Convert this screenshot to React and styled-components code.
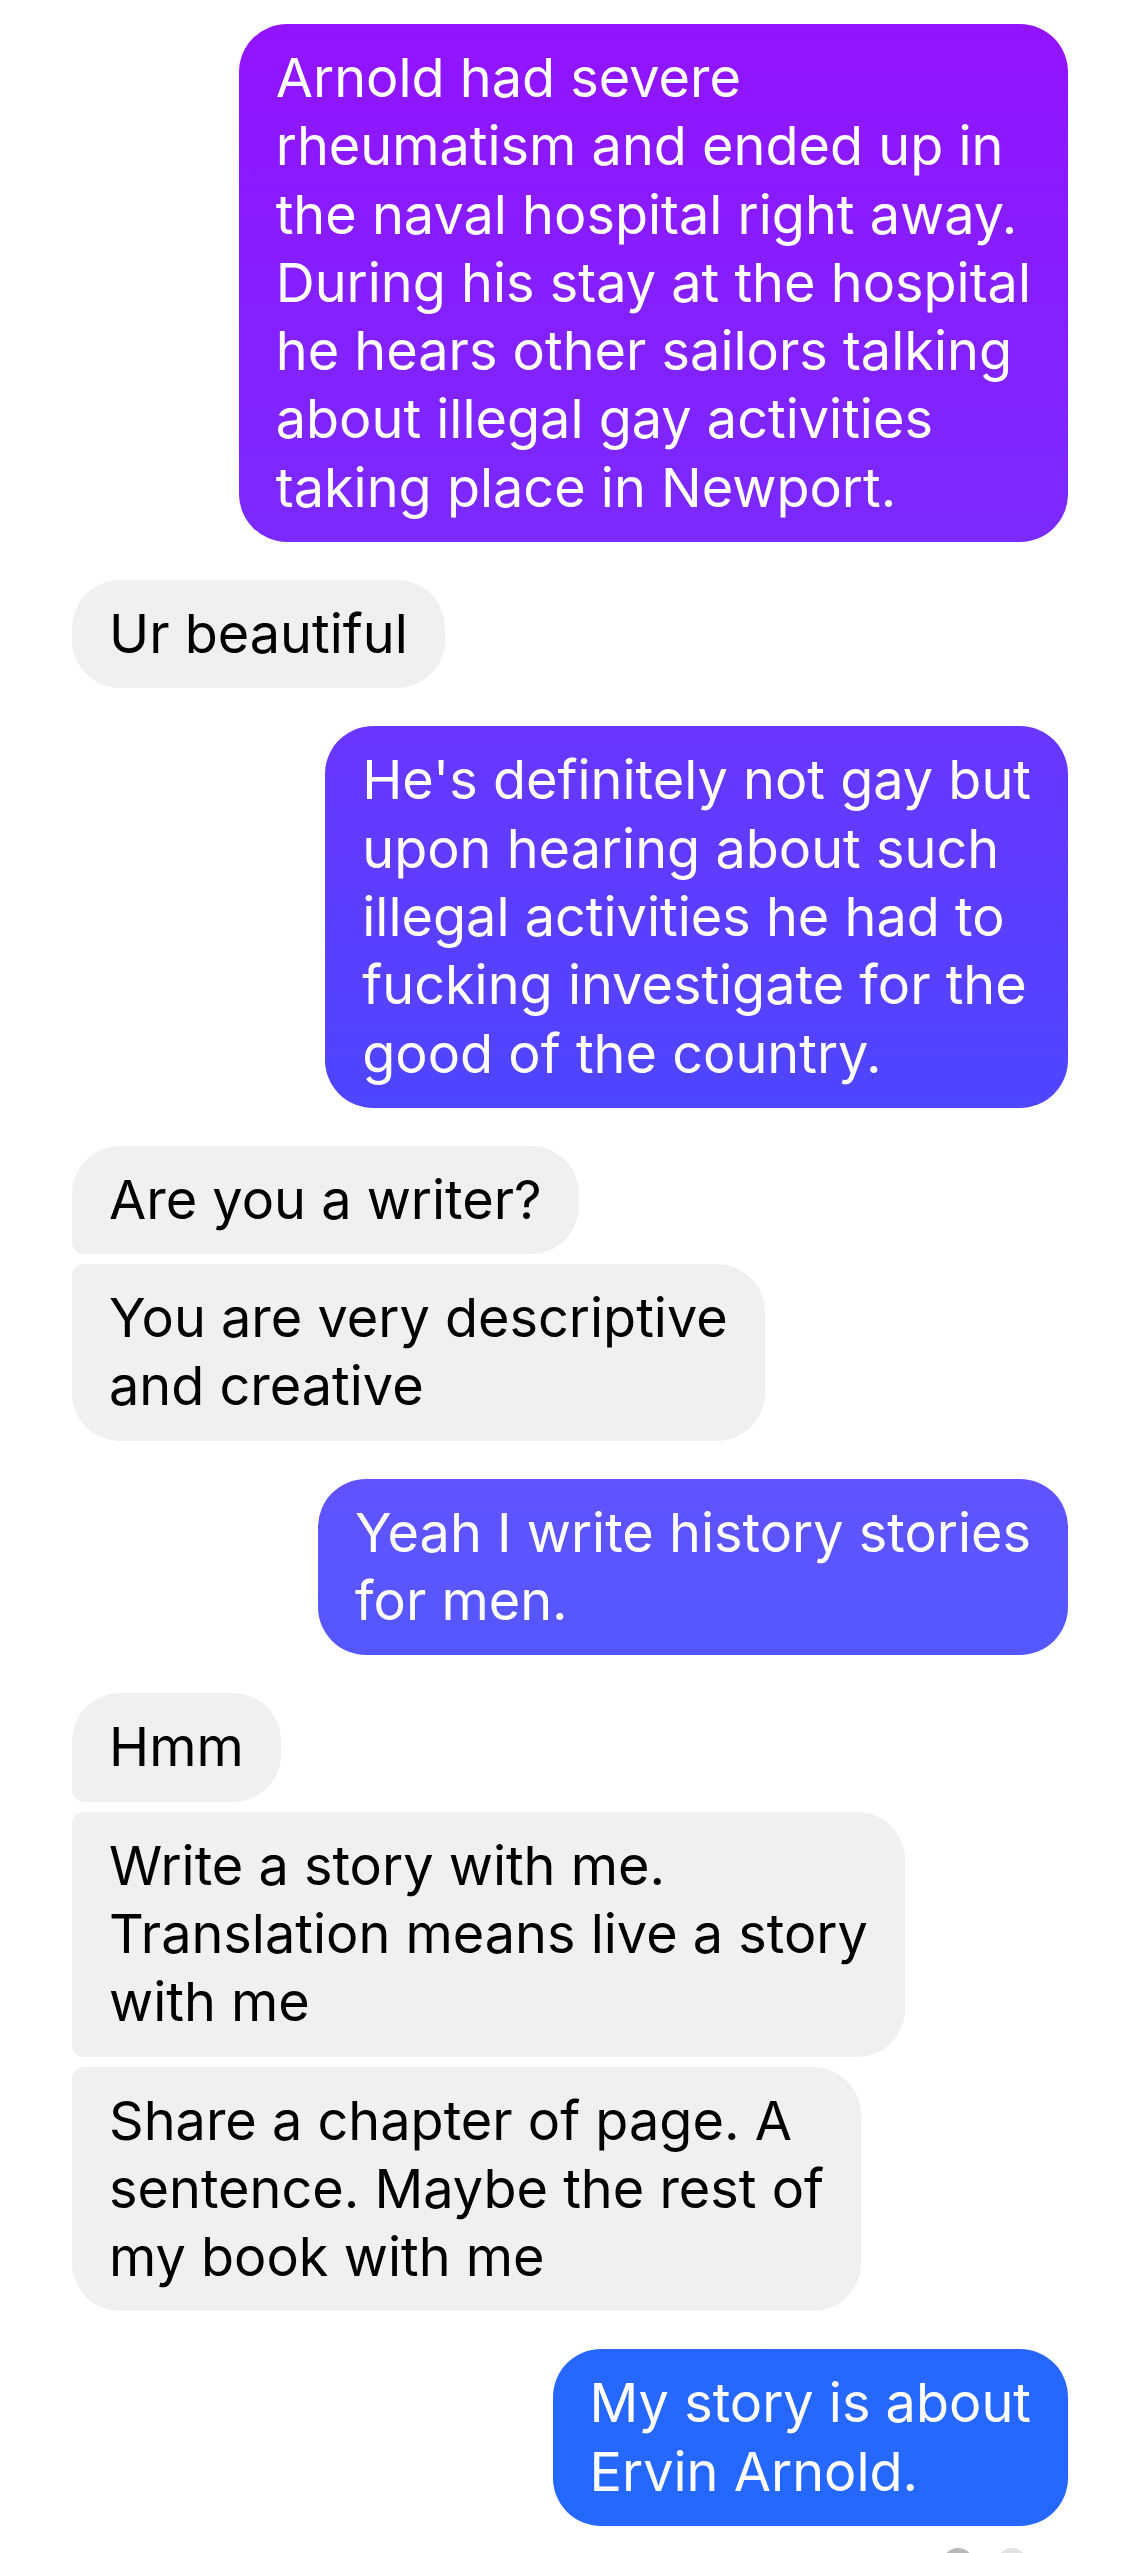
import React from 'react'
import styled, { createGlobalStyle, css } from 'styled-components'

const GlobalStyle = createGlobalStyle`
  html, body {
    margin: 0;
    padding: 0;
    background: #ffffff;
  }
  body {
    font-family: Inter, "Noto Sans", "Liberation Sans", sans-serif;
    -webkit-font-smoothing: antialiased;
  }
`

const Thread = styled.div`
  display: flex;
  flex-direction: column;
  padding: 24px 77px 0 72px;
  width: 1145px;
  box-sizing: border-box;
  overflow: hidden;
`

const Group = styled.div`
  display: flex;
  flex-direction: column;
  align-items: ${p => (p.$mine ? 'flex-end' : 'flex-start')};
  gap: 10px;
  margin-bottom: 38px;
`

const BIG = 48
const SMALL = 12

const Bubble = styled.div`
  box-sizing: border-box;
  padding: 20px 37px;
  font-size: 54px;
  line-height: 68.3px;
  letter-spacing: 0;
  white-space: pre-line;
  border-radius: ${BIG}px;

  ${p =>
    p.$mine
      ? css`
          color: #ffffff;
          background: linear-gradient(180deg, ${p.$from} 0%, ${p.$to} 100%);
        `
      : css`
          color: #000000;
          background: #f0f0f0;
        `}

  ${p =>
    p.$pos === 'first' &&
    css`
      border-bottom-left-radius: ${SMALL}px;
    `}
  ${p =>
    p.$pos === 'middle' &&
    css`
      border-top-left-radius: ${SMALL}px;
      border-bottom-left-radius: ${SMALL}px;
    `}
  ${p =>
    p.$pos === 'last' &&
    css`
      border-top-left-radius: ${SMALL}px;
    `}
`

const SeenRow = styled.div`
  display: flex;
  justify-content: flex-end;
  gap: 22px;
  padding-right: 40px;
  margin-top: -16px;
`

const SeenDot = styled.div`
  width: 32px;
  height: 32px;
  border-radius: 50%;
  background: ${p => p.$tone};
`

const messages = [
  {
    mine: true,
    from: '#9213fe',
    to: '#7a2aff',
    lines: [
      'Arnold had severe\nrheumatism and ended up in\nthe naval hospital right away.\nDuring his stay at the hospital\nhe hears other sailors talking\nabout illegal gay activities\ntaking place in Newport.'
    ]
  },
  { mine: false, lines: ['Ur beautiful'] },
  {
    mine: true,
    from: '#6936ff',
    to: '#4e46ff',
    lines: [
      "He's definitely not gay but\nupon hearing about such\nillegal activities he had to\nfucking investigate for the\ngood of the country."
    ]
  },
  {
    mine: false,
    lines: ['Are you a writer?', 'You are very descriptive\nand creative']
  },
  {
    mine: true,
    from: '#6153ff',
    to: '#5457ff',
    lines: ['Yeah I write history stories\nfor men.']
  },
  {
    mine: false,
    lines: [
      'Hmm',
      'Write a story with me.\nTranslation means live a story\nwith me',
      'Share a chapter of page. A\nsentence. Maybe the rest of\nmy book with me'
    ]
  },
  {
    mine: true,
    from: '#2767ff',
    to: '#2468ff',
    lines: ['My story is about\nErvin Arnold.']
  }
]

function position(i, n) {
  if (n === 1) return 'single'
  if (i === 0) return 'first'
  if (i === n - 1) return 'last'
  return 'middle'
}

function App() {
  return (
    <>
      <GlobalStyle />
      <Thread>
        {messages.map((m, gi) => (
          <Group key={gi} $mine={m.mine}>
            {m.lines.map((text, i) => (
              <Bubble
                key={i}
                $mine={m.mine}
                $from={m.from}
                $to={m.to}
                $pos={m.mine ? 'single' : position(i, m.lines.length)}
              >
                {text}
              </Bubble>
            ))}
          </Group>
        ))}
        <SeenRow>
          <SeenDot $tone="#b9b9b9" />
          <SeenDot $tone="#e3e3e3" />
        </SeenRow>
      </Thread>
    </>
  )
}

export default App
